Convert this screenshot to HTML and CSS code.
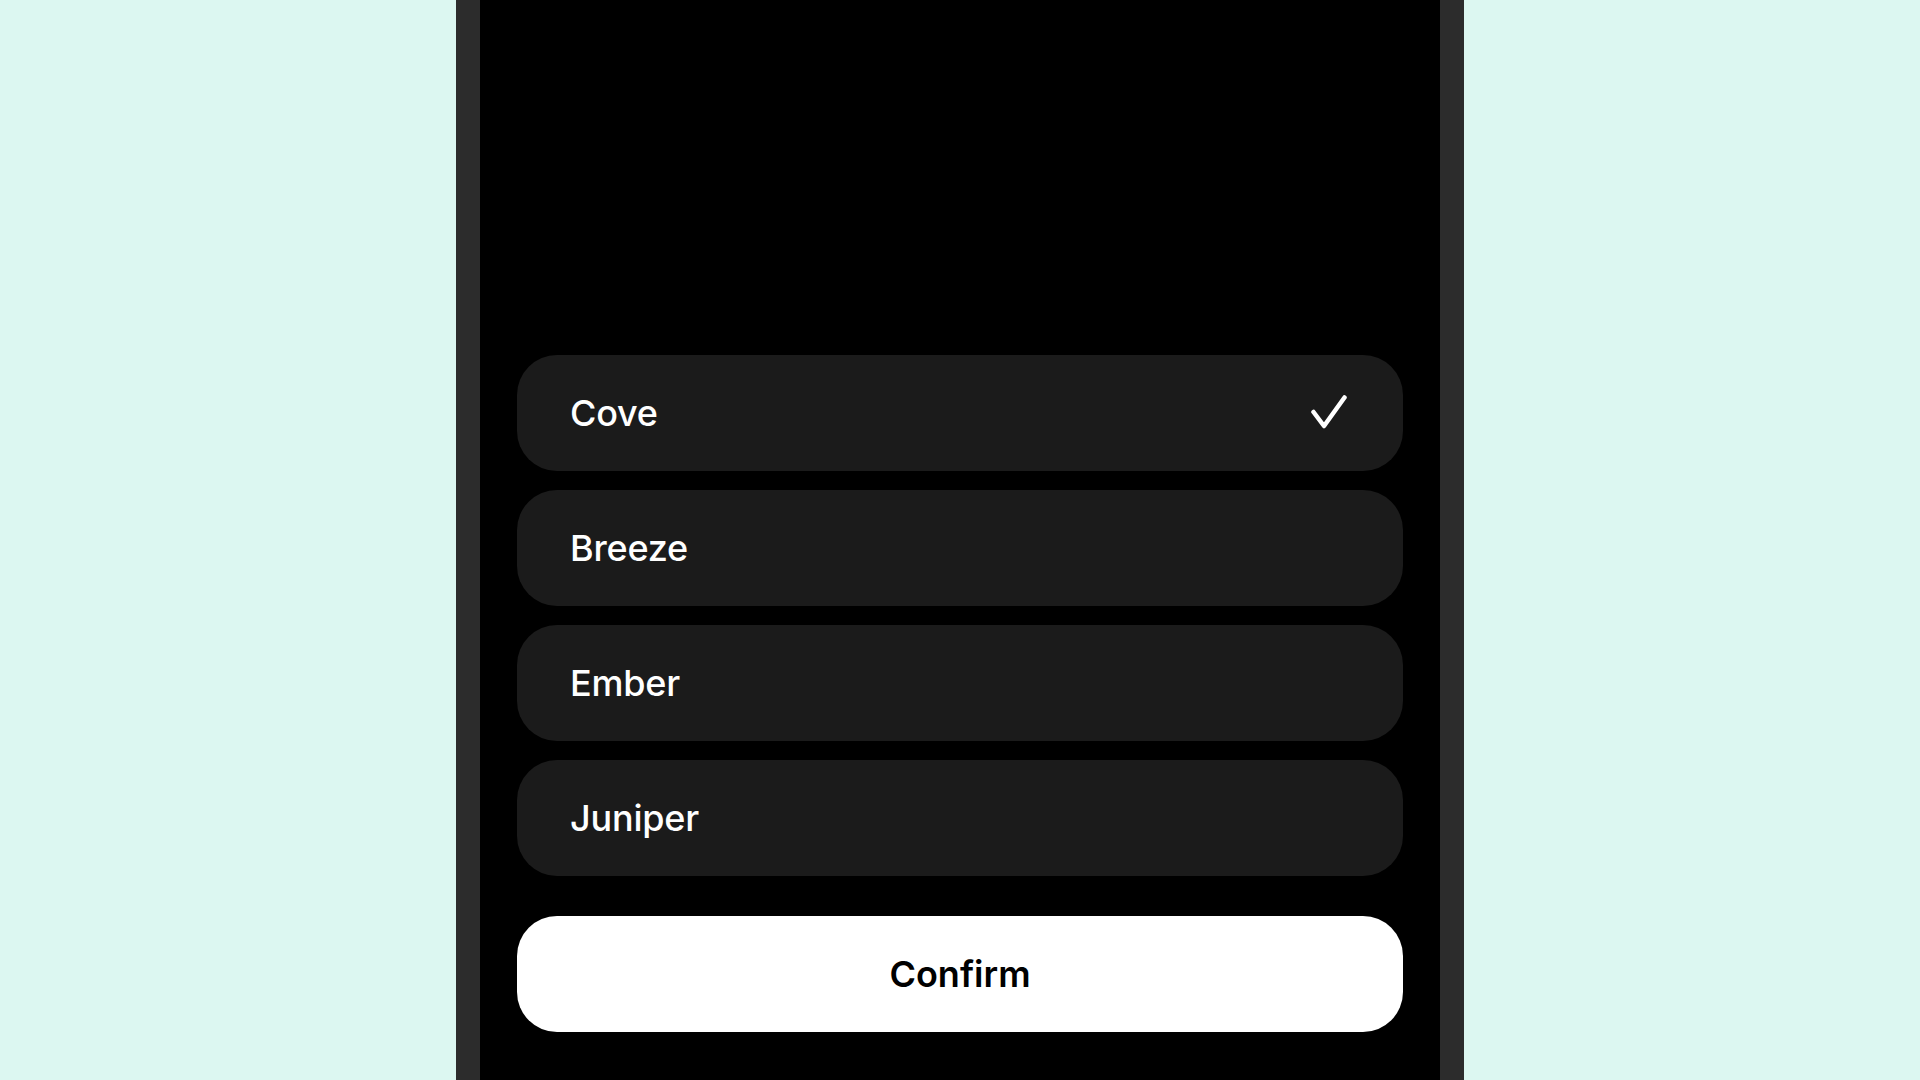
FILE: index.html
```html
<!DOCTYPE html>
<html lang="en">
<head>
    <meta charset="UTF-8">
    <meta name="viewport" content="width=device-width, initial-scale=1.0">
    <title>Choose a theme</title>
    <link rel="stylesheet" href="styles.css">
</head>
<body>
    <div class="phone">
        <div class="screen">
            <div class="options">
                <div class="option selected">
                    <span class="label">Cove</span>
                    <svg class="check" width="36" height="34" viewBox="0 0 36 34">
                        <path d="M2.5 17 L13 31 L33.5 2.5" fill="none" stroke="#fff" stroke-width="4.5" stroke-linecap="round" stroke-linejoin="round"/>
                    </svg>
                </div>
                <div class="option"><span class="label">Breeze</span></div>
                <div class="option"><span class="label">Ember</span></div>
                <div class="option"><span class="label">Juniper</span></div>
            </div>
            <button class="confirm">Confirm</button>
        </div>
    </div>
</body>
</html>
```

FILE: styles.css
```css
body {
    margin: 0;
    padding: 0;
    background-color: #dcf7f1;
    font-family: Inter, "Liberation Sans", sans-serif;
    display: flex;
    justify-content: center;
    height: 1080px;
    overflow: hidden;
}
.phone {
    width: 960px;
    height: 1080px;
    border-left: 24px solid #2c2c2c;
    border-right: 24px solid #2c2c2c;
    background-color: #000;
}
.screen {
    height: 100%;
    box-sizing: border-box;
    padding: 0 37px 48px 37px;
    display: flex;
    flex-direction: column;
    justify-content: flex-end;
}
.options {
    display: flex;
    flex-direction: column;
    gap: 19px;
}
.option {
    height: 116px;
    background-color: #1b1b1b;
    border-radius: 40px;
    display: flex;
    align-items: center;
    justify-content: space-between;
    padding: 0 56px 0 53px;
}
.label {
    color: #fff;
    font-size: 36px;
    font-weight: 500;
    letter-spacing: -0.2px;
}
.check {
    display: block;
    margin-top: -2px;
}
.confirm {
    margin-top: 40px;
    height: 116px;
    border: none;
    border-radius: 40px;
    background-color: #fff;
    color: #000;
    font-family: Inter, "Liberation Sans", sans-serif;
    font-size: 36px;
    font-weight: 600;
    cursor: pointer;
}
```
